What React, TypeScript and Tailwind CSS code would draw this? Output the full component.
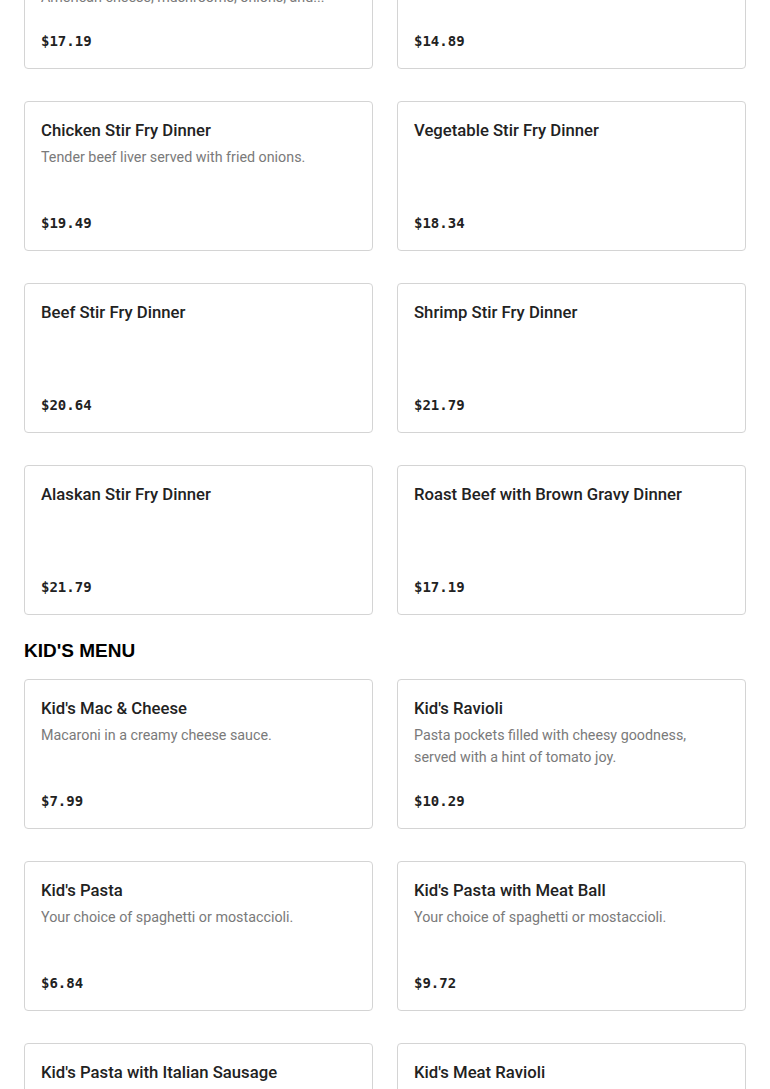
import React from "react";

type Item = { name: string; desc?: string; price: string };

const dinners: Item[] = [
  {
    name: "Philly Steak Dinner",
    desc: "Tender strips of grilled sirloin steak topped with American cheese, mushrooms, onions, and...",
    price: "$17.19",
  },
  { name: "Liver & Onions Dinner", price: "$14.89" },
  { name: "Chicken Stir Fry Dinner", desc: "Tender beef liver served with fried onions.", price: "$19.49" },
  { name: "Vegetable Stir Fry Dinner", price: "$18.34" },
  { name: "Beef Stir Fry Dinner", price: "$20.64" },
  { name: "Shrimp Stir Fry Dinner", price: "$21.79" },
  { name: "Alaskan Stir Fry Dinner", price: "$21.79" },
  { name: "Roast Beef with Brown Gravy Dinner", price: "$17.19" },
];

const kids: Item[] = [
  { name: "Kid's Mac & Cheese", desc: "Macaroni in a creamy cheese sauce.", price: "$7.99" },
  {
    name: "Kid's Ravioli",
    desc: "Pasta pockets filled with cheesy goodness, served with a hint of tomato joy.",
    price: "$10.29",
  },
  { name: "Kid's Pasta", desc: "Your choice of spaghetti or mostaccioli.", price: "$6.84" },
  { name: "Kid's Pasta with Meat Ball", desc: "Your choice of spaghetti or mostaccioli.", price: "$9.72" },
  { name: "Kid's Pasta with Italian Sausage", desc: "Your choice of spaghetti or mostaccioli.", price: "$9.72" },
  { name: "Kid's Meat Ravioli", desc: "Meat filled ravioli with marinara sauce.", price: "$10.29" },
];

const MenuCard = ({ item }: { item: Item }) => {
  return (
    <div className="h-[150px] rounded border border-[#d4d4d4] bg-white px-4 pt-[17px] pb-[17px] flex flex-col">
      <h3 className="text-[16.7px] leading-6 font-medium text-[#222]">{item.name}</h3>
      {item.desc && (
        <p className="mt-[3px] text-[14.3px] leading-[22px] text-[#7a7a7a] line-clamp-2">{item.desc}</p>
      )}
      <div className="mt-auto font-['DejaVu_Sans_Mono',monospace] font-bold text-[14px] leading-5 text-[#222]">
        {item.price}
      </div>
    </div>
  );
};

export default function App() {
  return (
    <div className="min-h-screen bg-white font-['Roboto',sans-serif] px-6 -mt-[81px] pb-10">
      <section>
        <div className="grid grid-cols-2 gap-x-6 gap-y-8">
          {dinners.map((d) => (
            <MenuCard key={d.name} item={d} />
          ))}
        </div>
      </section>
      <section>
        <h2 className="mt-[22px] mb-[14px] font-['Liberation_Sans',sans-serif] font-bold text-[19px] leading-7 text-black">
          KID'S MENU
        </h2>
        <div className="grid grid-cols-2 gap-x-6 gap-y-8">
          {kids.map((d) => (
            <MenuCard key={d.name} item={d} />
          ))}
        </div>
      </section>
    </div>
  );
}
